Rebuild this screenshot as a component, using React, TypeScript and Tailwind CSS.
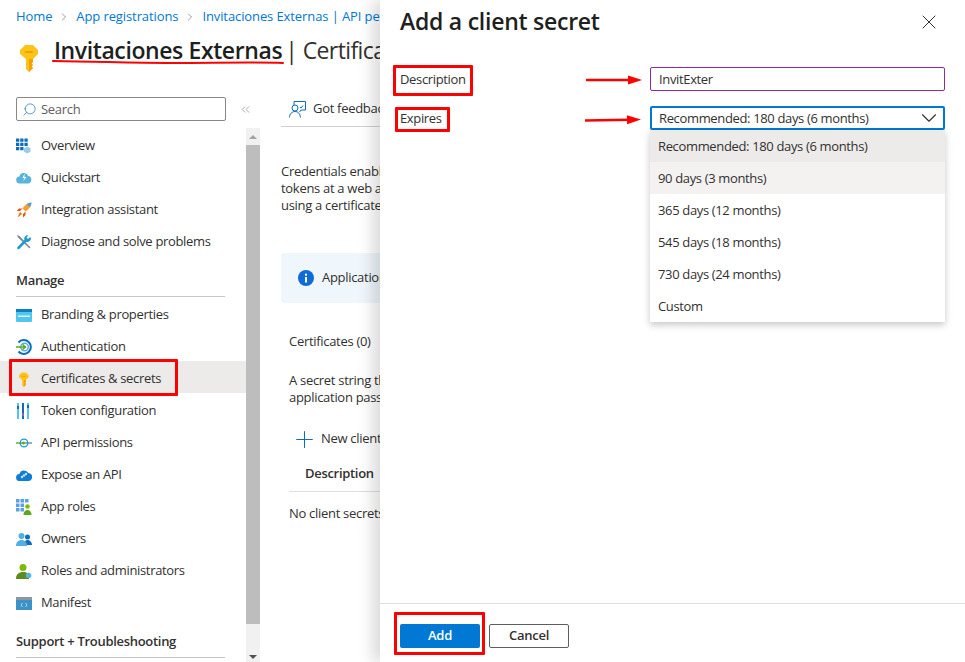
import { ChevronDown, ChevronRight, ChevronsLeft, Plus, Search, X } from 'lucide-react'
import type { ReactNode } from 'react'

const font = { fontFamily: '"Open Sans", "Noto Sans", sans-serif' }

const KeyIcon = ({ height = 16 }: { height?: number }) => (
  <svg width={(height * 18) / 28} height={height} viewBox="0 0 18 28">
    <path d="M5 1h8l5 5v4l-5 5v3l-1.500 1.500L13 21l-1.500 1.500L13 24l-4 4-3-3V15L0 10V6z" fill="#fcc419" />
    <path d="M9 15h4v3l-1.500 1.500L13 21l-1.500 1.500L13 24l-4 4z" fill="#f59f00" />
    <rect x="5" y="7" width="8" height="2" rx="1" fill="#f59f00" />
  </svg>
)

const OverviewIcon = () => (
  <svg width="15" height="16" viewBox="0 0 16 16">
    <path d="M0 0h3.500v3.500H0zM4.500 0H8v3.500H4.500zM9 0h3.500v3.500H9zM0 4.500h3.500V8H0zM4.500 4.500H8V8H4.500zM9 4.500h3.500V8H9zM0 9h3.500v3.500H0zM4.500 9H8v3.500H4.500z" fill="#0f6cbd" />
    <path d="M12 8.500l3.500 2V14L12 16l-3.500-2v-3.500z" fill="#9ccbe8" />
  </svg>
)

const QuickstartIcon = () => (
  <svg width="16" height="12" viewBox="0 0 16 12">
    <path d="M4 11.500a3.500 3.500 0 0 1-.6-7A4.500 4.500 0 0 1 12 3.800a3.900 3.900 0 0 1 0 7.700z" fill="#59b4d9" />
    <path d="M8.500 1.500L6.500 6h2L7 9.500 10.500 5h-2z" fill="#fff" />
  </svg>
)

const RocketIcon = () => (
  <svg width="16" height="16" viewBox="0 0 16 16">
    <path d="M15.500.5c-4 .3-7 2.500-9 6l3 3c3.500-2 5.700-5 6-9z" fill="#f7a12c" />
    <path d="M15.500.5c-1.800.1-3.400.6-4.800 1.500l3.300 3.300c.9-1.400 1.400-3 1.500-4.800z" fill="#4da3e0" />
    <path d="M6.500 6.500H3L.5 9H4zM9.500 9.500V13L7 15.500V12z" fill="#e8590c" />
    <path d="M4 10l2 2-4.500 3.500z" fill="#f76707" />
  </svg>
)

const ToolsIcon = () => (
  <svg width="16" height="16" viewBox="0 0 16 16">
    <path d="M1 1l2.500 1L13 12l1.500 1-1.200 1.500-1.300-1.500L2 3.500z" fill="#7a8a94" />
    <path d="M15 4.500a3.500 3.500 0 0 1-4.700 3.200l-6.800 7.100a1.300 1.300 0 0 1-2-1.800l6.900-7a3.500 3.500 0 0 1 4.100-4.700l-2 2.200L12 5l2.200-2z" fill="#1b9ad6" />
  </svg>
)

const BrandingIcon = () => (
  <svg width="16" height="13" viewBox="0 0 16 13">
    <rect width="16" height="13" rx="1" fill="#50c7f0" />
    <rect width="16" height="3" fill="#0f7dc2" />
    <path d="M2 6.500h12V8H2z" fill="#fff" opacity=".85" />
  </svg>
)

const AuthIcon = () => (
  <svg width="16" height="16" viewBox="0 0 16 16">
    <path d="M2.500 3.500a7 7 0 1 1 0 9" fill="none" stroke="#0f6cbd" strokeWidth="2" />
    <circle cx="8.500" cy="8" r="3.800" fill="none" stroke="#50b0e0" strokeWidth="1.400" />
    <path d="M0 8h9M6.500 5.500L9.500 8l-3 2.500" fill="none" stroke="#5ea81e" strokeWidth="1.600" />
  </svg>
)

const TokenIcon = () => (
  <svg width="14" height="16" viewBox="0 0 14 16">
    <rect x="1" width="2" height="16" fill="#50c7f0" />
    <rect x="1" y="3" width="2" height="3" fill="#0f6cbd" />
    <rect x="6" width="2" height="16" fill="#0f6cbd" />
    <rect x="6" y="10" width="2" height="3" fill="#8a5cc2" />
    <rect x="11" width="2" height="16" fill="#50c7f0" />
    <rect x="11" y="2" width="2" height="3" fill="#0f6cbd" />
  </svg>
)

const ApiIcon = () => (
  <svg width="16" height="10" viewBox="0 0 16 10">
    <path d="M0 5h6" stroke="#5ea81e" strokeWidth="1.400" />
    <path d="M9 5h7" stroke="#7a8a94" strokeWidth="1.400" />
    <circle cx="8" cy="5" r="3.800" fill="none" stroke="#1b9ad6" strokeWidth="1.300" />
    <circle cx="7.500" cy="5" r="1.600" fill="#5ea81e" />
  </svg>
)

const ExposeIcon = () => (
  <svg width="16" height="11" viewBox="0 0 16 11">
    <path d="M3.800 11a3.500 3.500 0 0 1-.4-7A4.800 4.800 0 0 1 12.300 3a4 4 0 0 1-.3 8z" fill="#0f7dd4" />
    <circle cx="6" cy="7" r="1.200" fill="#cfe6f7" />
    <circle cx="8" cy="5.500" r="1.200" fill="#cfe6f7" />
    <circle cx="10" cy="4" r="1.200" fill="#cfe6f7" />
  </svg>
)

const AppRolesIcon = () => (
  <svg width="16" height="16" viewBox="0 0 16 16">
    <path d="M0 0h3.500v3.500H0zM4.500 0H8v3.500H4.500zM9 0h3.500v3.500H9zM0 4.500h3.500V8H0zM4.500 4.500H8V8H4.500zM0 9h3.500v3.500H0zM4.500 9H8v3.500H4.500z" fill="#5aa0e6" />
    <circle cx="11.500" cy="7.500" r="2.300" fill="#7fba00" />
    <path d="M7.500 16c0-3.500 2-5 4-5s4 1.500 4 5z" fill="#5ea81e" />
  </svg>
)

const OwnersIcon = () => (
  <svg width="16" height="13" viewBox="0 0 16 13">
    <circle cx="11.500" cy="4" r="2.500" fill="#0f6cbd" />
    <path d="M8 12c0-3 1.500-5 3.500-5S16 9 16 12z" fill="#0f6cbd" />
    <circle cx="5.500" cy="3" r="3" fill="#50b0e0" />
    <path d="M0 13c0-4 2.500-6 5.500-6S11 9 11 13z" fill="#50b0e0" />
  </svg>
)

const RolesIcon = () => (
  <svg width="16" height="15" viewBox="0 0 16 15">
    <circle cx="7" cy="3.500" r="3.500" fill="#7fba00" />
    <path d="M0 15c0-5 3-7 7-7s5 1.500 6 3v4z" fill="#5e8a1e" />
    <circle cx="12.500" cy="11.500" r="2.800" fill="#59b4d9" />
  </svg>
)

const ManifestIcon = () => (
  <svg width="16" height="13" viewBox="0 0 16 13">
    <rect width="16" height="13" fill="#3c91c7" />
    <rect width="16" height="3" fill="#8a98a3" />
    <path d="M6.500 6L5 8l1.500 2M9.500 6L11 8l-1.500 2" fill="none" stroke="#cfe6f7" strokeWidth=".8" />
  </svg>
)

const FeedbackIcon = () => (
  <svg width="17" height="17" viewBox="0 0 17 17" fill="none" stroke="#0f6cbd" strokeWidth="1">
    <path d="M5 4V.5h11.500V9H12l-1.500 2" />
    <circle cx="6" cy="7" r="3" fill="#fff" />
    <path d="M.5 16.500c0-3.500 2.500-6 5.500-6s5 2 5.500 6" />
    <path d="M11 6l1 1 2-2.500" />
  </svg>
)

const InfoIcon = () => (
  <svg width="16" height="16" viewBox="0 0 16 16">
    <circle cx="8" cy="8" r="8" fill="#0f6cd4" />
    <rect x="7" y="7" width="2" height="5.500" fill="#fff" />
    <rect x="7" y="3.700" width="2" height="2" fill="#fff" />
  </svg>
)

const NavRow = ({ icon, label, active }: { icon: ReactNode; label: string; active?: boolean }) => (
  <div className={`flex h-8 items-center pt-1 ${active ? 'bg-[#edebe9]' : ''}`}>
    <div className="flex w-[41px] shrink-0 justify-start pl-4">{icon}</div>
    <span className="text-[13px] tracking-[-0.33px] text-[#323130]">{label}</span>
  </div>
)

const NavHeading = ({ label }: { label: string }) => (
  <div className="mr-[21px] ml-4 flex h-[32px] items-center border-b border-[#c8c6c4] text-[13px] font-semibold tracking-[-0.3px] text-[#323130]">
    {label}
  </div>
)

const ArrowRed = ({ className }: { className: string }) => (
  <svg className={`absolute ${className}`} width="60" height="12" viewBox="0 0 60 12">
    <path d="M2 6h44" stroke="#ff0000" strokeWidth="2.500" />
    <path d="M44 1.500L58 6 44 10.500z" fill="#ff0000" />
  </svg>
)

const options = [
  'Recommended: 180 days (6 months)',
  '90 days (3 months)',
  '365 days (12 months)',
  '545 days (18 months)',
  '730 days (24 months)',
  'Custom',
]

export default function App() {
  return (
    <div style={font} className="relative h-[662px] w-[965px] overflow-hidden bg-white text-[#323130]">
      <div className="flex h-[34px] items-center gap-[6px] whitespace-nowrap pl-4 text-[13px] tracking-[-0.1px] text-[#0078d4]">
        <span>Home</span>
        <ChevronRight size={12} strokeWidth={1.25} className="text-[#605e5c]" />
        <span>App registrations</span>
        <ChevronRight size={12} strokeWidth={1.25} className="text-[#605e5c]" />
        <span>Invitaciones Externas | API pe</span>
      </div>

      <div className="flex h-[32px] items-center whitespace-nowrap pl-[20px] leading-[28px]">
        <div className="w-[34px] shrink-0 pt-[16px]">
          <KeyIcon height={28} />
        </div>
        <span className="text-[23px] font-semibold tracking-[-0.4px] text-[#201f1e]">Invitaciones Externas</span>
        <span className="ml-[3px] text-[23px] tracking-[-0.6px] text-[#323130]">| Certificates &amp; secrets</span>
      </div>

      <div className="flex h-[596px]">
        <div className="w-[246px] shrink-0">
          <div className="flex h-[62px] items-start pt-[31px]">
            <div className="ml-4 flex h-6 w-[210px] shrink-0 items-center gap-[4px] rounded-[2px] border border-[#8a8886] pl-[5px] text-[13px] tracking-[-0.3px] text-[#605e5c]">
              <Search size={15} strokeWidth={1.1} className="-scale-x-100 text-[#0f6cbd]" />
              <span className="pt-[2px]">Search</span>
            </div>
            <ChevronsLeft size={13} strokeWidth={1} className="mt-[6px] ml-[13px] shrink-0 text-[#605e5c]" />
          </div>
          <NavRow icon={<OverviewIcon />} label="Overview" />
          <NavRow icon={<QuickstartIcon />} label="Quickstart" />
          <NavRow icon={<RocketIcon />} label="Integration assistant" />
          <NavRow icon={<ToolsIcon />} label="Diagnose and solve problems" />
          <div className="pt-[9px]">
            <NavHeading label="Manage" />
          </div>
          <NavRow icon={<BrandingIcon />} label="Branding & properties" />
          <NavRow icon={<AuthIcon />} label="Authentication" />
          <NavRow icon={<div className="pl-[3px]"><KeyIcon height={15} /></div>} label="Certificates & secrets" active />
          <NavRow icon={<TokenIcon />} label="Token configuration" />
          <NavRow icon={<ApiIcon />} label="API permissions" />
          <NavRow icon={<ExposeIcon />} label="Expose an API" />
          <NavRow icon={<AppRolesIcon />} label="App roles" />
          <NavRow icon={<OwnersIcon />} label="Owners" />
          <NavRow icon={<RolesIcon />} label="Roles and administrators" />
          <NavRow icon={<ManifestIcon />} label="Manifest" />
          <div className="pt-[9px]">
            <NavHeading label="Support + Troubleshooting" />
          </div>
        </div>

        <div className="mt-[62px] flex w-[14px] shrink-0 flex-col bg-[#f1f1f1]">
          <div className="flex h-[17px] items-center justify-center">
            <div className="h-0 w-0 border-x-[4px] border-b-[4px] border-x-transparent border-b-[#a3a3a3]" />
          </div>
          <div className="h-[479px] bg-[#bdbdbd]" />
          <div className="flex flex-1 items-end justify-center pb-[3px]">
            <div className="h-0 w-0 border-x-[4px] border-t-[4px] border-x-transparent border-t-[#505050]" />
          </div>
        </div>

        <div className="ml-[21px] flex-1 whitespace-nowrap text-[13px] tracking-[-0.3px]">
          <div className="mt-[26px] flex h-[35px] items-center gap-[7px] border-b border-[#d2d0ce] pl-2">
            <FeedbackIcon />
            Got feedback?
          </div>
          <div className="pt-[36px] leading-[17px]">
            <div>Credentials enable confidential</div>
            <div>tokens at a web addressable</div>
            <div>using a certificate (instead of)</div>
          </div>
          <div className="mt-[39px] flex h-[50px] items-center gap-[8px] rounded-[2px] bg-[#eff6fc] pl-[17px]">
            <InfoIcon />
            Application registration
          </div>
          <div className="pt-[29px] pl-2">Certificates (0)</div>
          <div className="pt-[20px] pl-2 leading-[17px]">
            <div>A secret string that the application</div>
            <div>application password.</div>
          </div>
          <div className="flex items-center gap-[3px] pt-[20px] pl-[10px]">
            <Plus size={27} strokeWidth={0.9} className="text-[#0f6cbd]" />
            New client secret
          </div>
          <div className="ml-2 flex h-[39px] items-center border-b border-[#e1dfdd] pt-[5px] pl-4 font-semibold">Description</div>
          <div className="pt-[12px] pl-2">No client secrets have been created</div>
        </div>
      </div>

      <div className="absolute inset-y-0 left-[380px] flex w-[585px] flex-col bg-white shadow-[-8px_0_14px_rgba(0,0,0,0.14)]">
        <div className="flex h-[44px] items-center justify-between pr-6 pb-[2px] pl-5">
          <span className="text-[23px] leading-[28px] font-semibold tracking-[-0.25px] text-[#201f1e]">Add a client secret</span>
          <X size={24} strokeWidth={1} className="mt-[2px] text-[#323130]" />
        </div>

        <div className="relative flex-1 pt-[23px] pl-5 text-[13px] tracking-[-0.35px]">
          <div className="flex h-6 items-center">
            <span className="w-[250px] pt-[2px]">Description</span>
            <div className="flex h-6 w-[295px] items-center rounded-[2px] border border-[#8a2da5] pt-[2px] pl-2">InvitExter</div>
          </div>
          <div className="mt-[15px] flex h-6 items-center">
            <span className="w-[250px] pt-[2px]">Expires</span>
            <div className="flex h-6 w-[295px] items-center justify-between rounded-[2px] border-2 border-[#0078d4] pr-[1px] pl-[7px]">
              <span className="pt-[2px]">Recommended: 180 days (6 months)</span>
              <ChevronDown size={26} strokeWidth={1} className="-my-1 text-[#323130]" />
            </div>
          </div>

          <div className="absolute top-[86px] left-[270px] w-[295px] bg-white shadow-[0_3px_7px_rgba(0,0,0,0.22)]">
            {options.map((o, i) => (
              <div
                key={o}
                className={`flex h-8 items-center pt-[2px] pl-2 ${i === 0 ? 'bg-[#edebe9]' : i === 1 ? 'bg-[#f3f2f1]' : ''}`}
              >
                {o}
              </div>
            ))}
          </div>
        </div>

        <div className="flex h-[59px] items-start gap-[9px] border-t border-[#e1dfdd] pt-5 pl-5 text-[13px] tracking-[-0.25px]">
          <div className="flex h-6 w-20 items-center justify-center rounded-[2px] bg-[#0078d4] font-semibold text-white">Add</div>
          <div className="flex h-6 w-20 items-center justify-center rounded-[2px] border border-[#605e5c] font-semibold">Cancel</div>
        </div>
      </div>

      {/* red annotations drawn on top of the screenshot */}
      <svg className="absolute top-[58px] left-[50px]" width="236" height="8" viewBox="0 0 236 8">
        <path d="M3 3c60 1 80 2 120 2s80-1 110 0" fill="none" stroke="#ff0000" strokeWidth="2" strokeLinecap="round" />
      </svg>
      <div className="absolute top-[359px] left-[9px] h-[37px] w-[169px] rounded-[1px] border-[3px] border-[#ff0000]" />
      <div className="absolute top-[65px] left-[393px] h-[31px] w-[80px] rounded-[1px] border-[3px] border-[#ff0000]" />
      <div className="absolute top-[107px] left-[395px] h-[25px] w-[55px] rounded-[1px] border-[3px] border-[#ff0000]" />
      <div className="absolute top-[612px] left-[394px] h-[43px] w-[91px] rounded-[1px] border-[3px] border-[#ff0000]" />
      <ArrowRed className="top-[74px] left-[584px]" />
      <ArrowRed className="top-[114px] left-[583px] -rotate-[1deg]" />
    </div>
  )
}
